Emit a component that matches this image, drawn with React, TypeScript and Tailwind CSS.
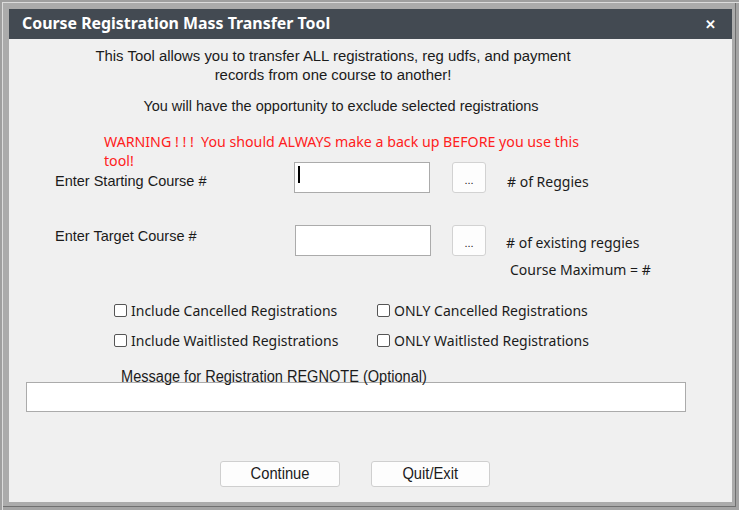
const segoe = 'font-["Noto_Sans","Open_Sans",sans-serif]'
const arial = 'font-["Liberation_Sans",Arial,sans-serif]'

function Checkbox({ label }: { label: string }) {
  return (
    <label className="flex items-center gap-[4px]">
      <span className="w-[13px] h-[13px] rounded-[2px] border border-[#555] bg-white shrink-0" />
      <span className="text-[14px] leading-[19px] text-[#1b1b1b]">{label}</span>
    </label>
  )
}

function DotsButton() {
  return (
    <button className="w-[34px] h-[31px] rounded-[3px] border border-[#d2d2d2] bg-[#fdfdfd] flex items-end justify-center pb-[6px] text-[11px] leading-none text-[#222]">
      ...
    </button>
  )
}

export default function App() {
  return (
    <div className="w-[739px] h-[510px] bg-[#ababab] border-t-[2px] border-l-[2px] border-[#9f9f9f] shadow-[inset_1px_1px_0_#dcdcdc,inset_-3px_-3px_0_#a4a4a4,inset_-4px_-4px_0_#707070]">
      <div className="pt-[7px] pl-[7px] pr-[7px] pb-[8px] h-full flex flex-col">
        {/* title bar */}
        <div className="h-[30px] bg-[#434a52] flex items-center justify-between pl-[13px] pr-[16px] shrink-0">
          <span className={`${segoe} text-white font-bold text-[15.9px]`}>
            Course Registration Mass Transfer Tool
          </span>
          <span className="text-white font-bold text-[13px] leading-none">✕</span>
        </div>

        {/* body */}
        <div className={`flex-1 bg-[#f0f0f0] text-[#1b1b1b] ${arial}`}>
          <p className="mt-[8px] ml-[80px] w-[488px] text-center text-[14.9px] leading-[19px]">
            This Tool allows you to transfer ALL registrations, reg udfs, and payment records from one course to another!
          </p>
          <p className="mt-[12px] ml-[82px] w-[500px] text-center text-[14.5px] leading-[19px]">
            You will have the opportunity to exclude selected registrations
          </p>

          <p className={`${segoe} mt-[16px] ml-[95px] w-[490px] text-[14.2px] leading-[19px] text-[#ff2020]`}>
            WARNING ! ! !&nbsp; You should ALWAYS make a back up BEFORE you use this tool!
          </p>

          {/* starting course */}
          <div className="mt-[-8px] flex items-start h-[31px]">
            <span className="ml-[46px] w-[239px] pt-[10px] text-[14.5px] leading-[19px]">Enter Starting Course #</span>
            <div className="relative w-[136px] h-[31px] border border-[#ababab] bg-white">
              <span className="absolute left-[3px] top-[3px] w-[2px] h-[17px] bg-black" />
            </div>
            <div className="ml-[22px]">
              <DotsButton />
            </div>
            <span className={`${segoe} ml-[21px] pt-[10px] text-[14px] leading-[19px]`}># of Reggies</span>
          </div>

          {/* target course */}
          <div className="mt-[32px] flex items-start h-[31px]">
            <span className="ml-[46px] w-[240px] pt-[2px] text-[14.5px] leading-[19px]">Enter Target Course #</span>
            <div className="w-[136px] h-[31px] border border-[#ababab] bg-white" />
            <div className="ml-[21px]">
              <DotsButton />
            </div>
            <span className={`${segoe} ml-[20px] pt-[8px] text-[14px] leading-[19px]`}># of existing reggies</span>
          </div>
          <p className={`${segoe} mt-[4px] ml-[501px] text-[14px] leading-[19px]`}>Course Maximum = #</p>

          {/* options */}
          <div className={`${segoe} mt-[22px] ml-[105px] grid grid-cols-[263px_auto] gap-y-[11px]`}>
            <Checkbox label="Include Cancelled Registrations" />
            <Checkbox label="ONLY Cancelled Registrations" />
            <Checkbox label="Include Waitlisted Registrations" />
            <Checkbox label="ONLY Waitlisted Registrations" />
          </div>

          {/* note */}
          <p className="mt-[18px] ml-[112px] text-[16px] leading-[18px] scale-x-[0.91] origin-left whitespace-nowrap">
            Message for Registration REGNOTE (Optional)
          </p>
          <div className="mt-[-4px] ml-[17px] w-[660px] h-[30px] border border-[#ababab] bg-white" />

          {/* actions */}
          <div className="mt-[49px] ml-[211px] flex gap-[31px]">
            <button className="w-[120px] h-[26px] rounded-[3px] border border-[#cfcfcf] bg-[#fdfdfd]">
              <span className="inline-block text-[16px] leading-none scale-x-[0.92]">Continue</span>
            </button>
            <button className="w-[119px] h-[26px] rounded-[3px] border border-[#cfcfcf] bg-[#fdfdfd]">
              <span className="inline-block text-[16px] leading-none scale-x-[0.92]">Quit/Exit</span>
            </button>
          </div>
        </div>
      </div>
    </div>
  )
}
